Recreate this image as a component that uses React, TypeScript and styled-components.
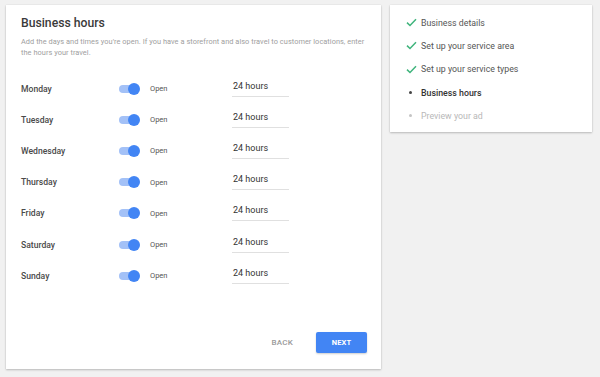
import React from "react";
import styled, { createGlobalStyle } from "styled-components";

const GlobalStyle = createGlobalStyle`
  html, body {
    margin: 0;
    padding: 0;
    background: #f1f1f1;
    font-family: Roboto, "Liberation Sans", Arial, sans-serif;
  }
`;

const Page = styled.div`
  display: flex;
  align-items: flex-start;
  gap: 9px;
  width: 600px;
  height: 377px;
  padding: 5px 0 0 6px;
  box-sizing: border-box;
  background: #f1f1f1;
`;

const Card = styled.div`
  background: #ffffff;
  box-shadow: 0 1px 2px rgba(0, 0, 0, 0.22), 0 0 1px rgba(0, 0, 0, 0.12);
  box-sizing: border-box;
`;

const MainCard = styled(Card)`
  width: 375px;
  height: 364px;
  padding: 9px 14px 16px 15px;
  display: flex;
  flex-direction: column;
`;

const Title = styled.h1`
  margin: 0;
  font-size: 12.2px;
  font-weight: 500;
  line-height: 18px;
  color: #3a3a3a;
`;

const Description = styled.p`
  margin: 3.5px 0 0;
  font-size: 7.4px;
  letter-spacing: 0.04px;
  line-height: 11px;
  color: #a0a0a0;
`;

const Rows = styled.div`
  margin-top: 15.5px;
  display: flex;
  flex-direction: column;
`;

const Row = styled.div`
  display: grid;
  grid-template-columns: 98px 31px 82px 57px;
  align-items: center;
  height: 31.2px;
`;

const Day = styled.span`
  font-size: 8.6px;
  font-weight: 500;
  color: #4a4a4a;
`;

const Toggle = styled.span`
  position: relative;
  display: block;
  width: 20px;
  height: 8px;
  border-radius: 4px;
  background: #a3c1f7;

  &::after {
    content: "";
    position: absolute;
    right: -1px;
    top: -2px;
    width: 12px;
    height: 12px;
    border-radius: 50%;
    background: #4285f4;
  }
`;

const OpenLabel = styled.span`
  font-size: 7.5px;
  color: #555555;
`;

const Hours = styled.span`
  display: block;
  font-size: 9px;
  line-height: 11px;
  color: #333333;
  padding: 0 0 4px 1px;
  border-bottom: 1px solid #e0e0e0;
`;

const Footer = styled.div`
  margin-top: auto;
  display: flex;
  justify-content: flex-end;
  align-items: center;
  gap: 23px;
`;

const TextButton = styled.button`
  border: none;
  background: none;
  padding: 0;
  font-family: inherit;
  font-size: 8px;
  font-weight: 500;
  letter-spacing: 0.2px;
  color: #9a9a9a;
`;

const PrimaryButton = styled.button`
  width: 51px;
  height: 21px;
  border: none;
  border-radius: 2px;
  background: #4285f4;
  color: #ffffff;
  font-family: inherit;
  font-size: 7.5px;
  font-weight: 700;
  letter-spacing: 0.2px;
  box-shadow: 0 1px 2px rgba(0, 0, 0, 0.2);
`;

const StepsCard = styled(Card)`
  width: 202px;
  padding: 6px 0 5px 16px;
  display: flex;
  flex-direction: column;
`;

const Step = styled.div<{ $state: "done" | "current" | "todo" }>`
  display: flex;
  align-items: center;
  height: 23.3px;
  font-size: 8.8px;
  color: ${(p) =>
    p.$state === "todo" ? "#b8b8b8" : p.$state === "current" ? "#333333" : "#555555"};
  font-weight: ${(p) => (p.$state === "current" ? 500 : 400)};
`;

const Marker = styled.span`
  width: 15px;
  display: flex;
  align-items: center;
  justify-content: flex-start;
`;

const Dot = styled.span<{ $muted?: boolean }>`
  width: 3px;
  height: 3px;
  margin-left: 3px;
  border-radius: 50%;
  background: ${(p) => (p.$muted ? "#c4c4c4" : "#444444")};
`;

const Check = () => (
  <svg width="11" height="9" viewBox="0 0 11 9">
    <path d="M1 4.6 L4 7.5 L10 1.2" fill="none" stroke="#3fb47c" strokeWidth="1.5" />
  </svg>
);

const days = ["Monday", "Tuesday", "Wednesday", "Thursday", "Friday", "Saturday", "Sunday"];

const steps: { label: string; state: "done" | "current" | "todo" }[] = [
  { label: "Business details", state: "done" },
  { label: "Set up your service area", state: "done" },
  { label: "Set up your service types", state: "done" },
  { label: "Business hours", state: "current" },
  { label: "Preview your ad", state: "todo" },
];

export default function App() {
  return (
    <>
      <GlobalStyle />
      <Page>
        <MainCard>
          <Title>Business hours</Title>
          <Description>
            Add the days and times you're open. If you have a storefront and also travel to customer locations, enter
            the hours your travel.
          </Description>
          <Rows>
            {days.map((d) => (
              <Row key={d}>
                <Day>{d}</Day>
                <Toggle />
                <OpenLabel>Open</OpenLabel>
                <Hours>24 hours</Hours>
              </Row>
            ))}
          </Rows>
          <Footer>
            <TextButton>BACK</TextButton>
            <PrimaryButton>NEXT</PrimaryButton>
          </Footer>
        </MainCard>
        <StepsCard>
          {steps.map((s) => (
            <Step key={s.label} $state={s.state}>
              <Marker>
                {s.state === "done" ? <Check /> : <Dot $muted={s.state === "todo"} />}
              </Marker>
              {s.label}
            </Step>
          ))}
        </StepsCard>
      </Page>
    </>
  );
}
